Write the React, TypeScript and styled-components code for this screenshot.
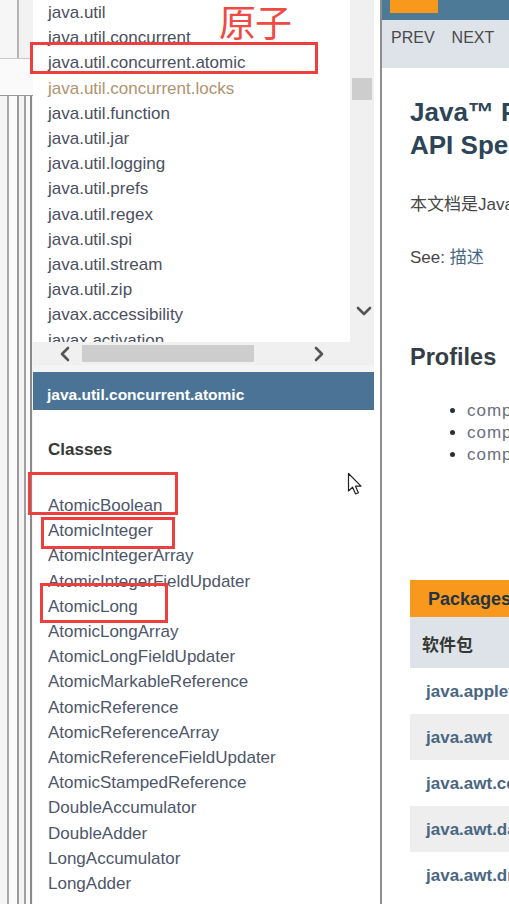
import React from 'react';
import styled, { createGlobalStyle } from 'styled-components';

const GlobalStyle = createGlobalStyle`
  html, body {
    margin: 0;
    padding: 0;
    overflow: hidden;
    background: #f0f0f0;
  }
  body {
    font-family: "Liberation Sans", Arial, "Noto Sans CJK SC", sans-serif;
  }
`;

const packages = [
  'java.util',
  'java.util.concurrent',
  'java.util.concurrent.atomic',
  'java.util.concurrent.locks',
  'java.util.function',
  'java.util.jar',
  'java.util.logging',
  'java.util.prefs',
  'java.util.regex',
  'java.util.spi',
  'java.util.stream',
  'java.util.zip',
  'javax.accessibility',
  'javax.activation',
  'javax.activity',
];

const classes = [
  'AtomicBoolean',
  'AtomicInteger',
  'AtomicIntegerArray',
  'AtomicIntegerFieldUpdater',
  'AtomicLong',
  'AtomicLongArray',
  'AtomicLongFieldUpdater',
  'AtomicMarkableReference',
  'AtomicReference',
  'AtomicReferenceArray',
  'AtomicReferenceFieldUpdater',
  'AtomicStampedReference',
  'DoubleAccumulator',
  'DoubleAdder',
  'LongAccumulator',
  'LongAdder',
];

const packageRows = ['java.applet', 'java.awt', 'java.awt.color', 'java.awt.datatransfer', 'java.awt.dnd'];

// page shell
const Page = styled.div`
  position: relative;
  display: flex;
  width: 509px;
  height: 904px;
  overflow: hidden;
  background: #f0f0f0;
`;

// sliver of the window behind, on the far left
const LeftStrip = styled.div`
  width: 33px;
  flex-shrink: 0;
  display: flex;
  flex-direction: column;
  background: #f2f2f2;
`;

const StripTop = styled.div`
  height: 58px;
  display: flex;
  border-bottom: 1px solid #c8c8c8;
`;

const StripCell = styled.div<{ $w: number; $line?: string; $bg?: string }>`
  width: ${(p) => p.$w}px;
  flex-shrink: 0;
  background: ${(p) => p.$bg || 'transparent'};
  border-right: ${(p) => (p.$line ? `2px solid ${p.$line}` : 'none')};
`;

const StripBody = styled.div`
  flex: 1;
  display: flex;
  padding-top: 36px;
  background: #fafafa;
`;

const StripBox = styled.div`
  flex: 1;
  display: flex;
  border-top: 1px solid #9a9a9a;
  background: #f4f4f4;
`;

// middle: package list + class list
const PackagesPane = styled.div`
  width: 349px;
  flex-shrink: 0;
  display: flex;
  flex-direction: column;
  background: #fff;
  border-right: 2px solid #8e8e8e;
  padding-right: 6px;
  box-sizing: border-box;
`;

const TopFrame = styled.div`
  display: grid;
  grid-template-columns: 1fr 24px;
  grid-template-rows: 342px 23px;
`;

const PackageList = styled.ul`
  margin: 0;
  padding: 0 0 0 15px;
  list-style: none;
  overflow: hidden;
  background: #fff;
`;

const PackageItem = styled.li<{ $visited?: boolean }>`
  font-size: 17px;
  line-height: 25.2px;
  color: ${(p) => (p.$visited ? '#b0936f' : '#4b5060')};
  white-space: nowrap;
`;

const VScroll = styled.div`
  display: flex;
  flex-direction: column;
  align-items: center;
  background: #f0f0f0;
`;

const VThumb = styled.div`
  margin-top: 78px;
  width: 20px;
  height: 22px;
  background: #cdcdcd;
`;

const VArrow = styled.div`
  margin-top: auto;
  margin-bottom: 22px;
  margin-left: 3px;
  color: #555;
  display: flex;
`;

const HScroll = styled.div`
  grid-column: 1 / span 2;
  display: flex;
  align-items: center;
  background: #f0f0f0;
  padding-left: 25px;
  color: #555;
`;

const HThumb = styled.div`
  margin-left: 8px;
  width: 172px;
  height: 17px;
  background: #cdcdcd;
`;

const HArrowRight = styled.div`
  margin-left: 57px;
  display: flex;
`;

const FrameGap = styled.div`
  height: 7px;
  background: #f4f4f4;
`;

const PackageHeader = styled.div`
  height: 38px;
  box-sizing: border-box;
  padding: 14px 0 0 14px;
  background: #4a7396;
  color: #fff;
  font-weight: bold;
  font-size: 15.5px;
  line-height: 18px;
`;

const ClassesTitle = styled.h2`
  margin: 27px 0 0 15px;
  font-size: 17px;
  line-height: 25px;
  color: #353833;
`;

const ClassList = styled.ul`
  margin: 31px 0 0 0;
  padding: 0 0 0 15px;
  list-style: none;
`;

const ClassItem = styled.li`
  font-size: 17px;
  line-height: 25.2px;
  color: #4e566a;
  white-space: nowrap;
`;

// right frame: overview page
const RightPane = styled.div`
  flex: 1;
  display: flex;
  flex-direction: column;
  background: #fff;
  overflow: hidden;
`;

const TopNav = styled.div`
  height: 20px;
  flex-shrink: 0;
  background: #4d7a97;
  padding-left: 8px;
`;

const NavTab = styled.div`
  width: 48px;
  height: 13px;
  background: #f8981d;
`;

const SubNav = styled.div`
  height: 48px;
  flex-shrink: 0;
  box-sizing: border-box;
  display: flex;
  gap: 17px;
  padding: 9px 0 0 9px;
  background: #dee3e9;
  font-size: 16px;
  line-height: 18px;
  color: #4a4a4a;
  white-space: nowrap;
`;

const Content = styled.div`
  padding: 28px 0 0 28px;
  white-space: nowrap;
`;

const Title = styled.h1`
  margin: 0;
  font-size: 26px;
  line-height: 33px;
  color: #2c4557;
`;

const Para = styled.p<{ $top: number }>`
  margin: ${(p) => p.$top}px 0 0;
  font-size: 17px;
  line-height: 22px;
  color: #474747;
`;

const Link = styled.span`
  color: #4a6782;
`;

const SectionTitle = styled.h2`
  margin: 73px 0 0;
  font-size: 23.5px;
  line-height: 30px;
  color: #353d45;
`;

const Bullets = styled.ul`
  margin: 28px 0 0;
  padding-left: 57px;
  font-size: 17px;
  line-height: 22px;
  color: #6b6f80;
  letter-spacing: 1px;

  li::marker {
    color: #2a2f3a;
  }
`;

const TableCaption = styled.div`
  margin-top: 114px;
  height: 37px;
  box-sizing: border-box;
  padding: 9px 0 0 18px;
  background: #f8981d;
  color: #253441;
  font-weight: bold;
  font-size: 18px;
  line-height: 20px;
`;

const HeadRow = styled.div`
  height: 51px;
  box-sizing: border-box;
  padding: 19px 0 0 12px;
  background: #dee3e9;
  color: #353833;
  font-weight: bold;
  font-size: 17px;
  line-height: 20px;
`;

const Row = styled.div<{ $alt: boolean }>`
  height: 46px;
  box-sizing: border-box;
  padding: 14px 0 0 16px;
  background: ${(p) => (p.$alt ? '#eeeeef' : '#fff')};
  color: #4a6782;
  font-weight: bold;
  font-size: 17px;
  line-height: 20px;
`;

// hand-drawn annotations over the screenshot
const Mark = styled.div<{ $x: number; $y: number; $w: number; $h: number }>`
  position: absolute;
  left: ${(p) => p.$x}px;
  top: ${(p) => p.$y}px;
  width: ${(p) => p.$w}px;
  height: ${(p) => p.$h}px;
  box-sizing: border-box;
  border: 3px solid #ee3f3f;
  pointer-events: none;
`;

const Note = styled.div`
  position: absolute;
  left: 219px;
  top: -3px;
  font-family: "Noto Sans CJK SC", sans-serif;
  font-size: 37px;
  line-height: 48px;
  color: #ef4a43;
  letter-spacing: -1px;
`;

const Cursor = styled.svg`
  position: absolute;
  left: 347px;
  top: 472px;
`;

const Chevron = ({ dir }: { dir: 'down' | 'left' | 'right' }) => {
  const d = dir === 'down' ? 'M2 4 L8 10 L14 4' : dir === 'left' ? 'M10 2 L4 8 L10 14' : 'M5 2 L11 8 L5 14';
  return (
    <svg width="16" height="16" viewBox="0 0 16 16">
      <path d={d} fill="none" stroke="#555" strokeWidth="2.6" strokeLinecap="round" strokeLinejoin="round" />
    </svg>
  );
};

function App() {
  return (
    <>
      <GlobalStyle />
      <Page>
        <LeftStrip>
          <StripTop>
            <StripCell $w={17} $line="#b4b4b4" $bg="#f6f6f6" />
          </StripTop>
          <StripBody>
            <StripBox>
              <StripCell $w={7} $line="#a8a8a8" />
              <StripCell $w={8} $line="#9a9a9a" $bg="#fafafa" />
              <StripCell $w={5} $line="#a0a0a0" $bg="#f4f4f4" />
              <StripCell $w={4} $line="#8a8a8a" $bg="#fafafa" />
            </StripBox>
          </StripBody>
        </LeftStrip>

        <PackagesPane>
          <TopFrame>
            <PackageList>
              {packages.map((p) => (
                <PackageItem key={p} $visited={p === 'java.util.concurrent.locks'}>
                  {p}
                </PackageItem>
              ))}
            </PackageList>
            <VScroll>
              <VThumb />
              <VArrow>
                <Chevron dir="down" />
              </VArrow>
            </VScroll>
            <HScroll>
              <Chevron dir="left" />
              <HThumb />
              <HArrowRight>
                <Chevron dir="right" />
              </HArrowRight>
            </HScroll>
          </TopFrame>
          <FrameGap />
          <PackageHeader>java.util.concurrent.atomic</PackageHeader>
          <ClassesTitle>Classes</ClassesTitle>
          <ClassList>
            {classes.map((c) => (
              <ClassItem key={c}>{c}</ClassItem>
            ))}
          </ClassList>
        </PackagesPane>

        <RightPane>
          <TopNav>
            <NavTab />
          </TopNav>
          <SubNav>
            <span>PREV</span>
            <span>NEXT</span>
          </SubNav>
          <Content>
            <Title>
              Java™ Platform, Standard Edition 8
              <br />
              API Specification
            </Title>
            <Para $top={32}>本文档是Java™ Platform Standard Edition 8 的 API 规范。</Para>
            <Para $top={31}>
              See: <Link>描述</Link>
            </Para>
            <SectionTitle>Profiles</SectionTitle>
            <Bullets>
              <li>compact1</li>
              <li>compact2</li>
              <li>compact3</li>
            </Bullets>
            <TableCaption>Packages</TableCaption>
            <HeadRow>软件包</HeadRow>
            {packageRows.map((r, i) => (
              <Row key={r} $alt={i % 2 === 1}>
                {r}
              </Row>
            ))}
          </Content>
        </RightPane>

        <Note>原子</Note>
        <Mark $x={30} $y={42} $w={288} $h={32} />
        <Mark $x={28} $y={472} $w={150} $h={43} />
        <Mark $x={41} $y={517} $w={134} $h={32} />
        <Mark $x={40} $y={583} $w={128} $h={40} />

        <Cursor width="16" height="24" viewBox="0 0 16 24">
          <path
            d="M1.5 1.5 L1.5 19 L5.6 15.2 L8.6 22 L11.4 20.8 L8.5 14.2 L14 14.2 Z"
            fill="#fff"
            stroke="#222"
            strokeWidth="1.2"
            strokeLinejoin="round"
          />
        </Cursor>
      </Page>
    </>
  );
}

export default App;
